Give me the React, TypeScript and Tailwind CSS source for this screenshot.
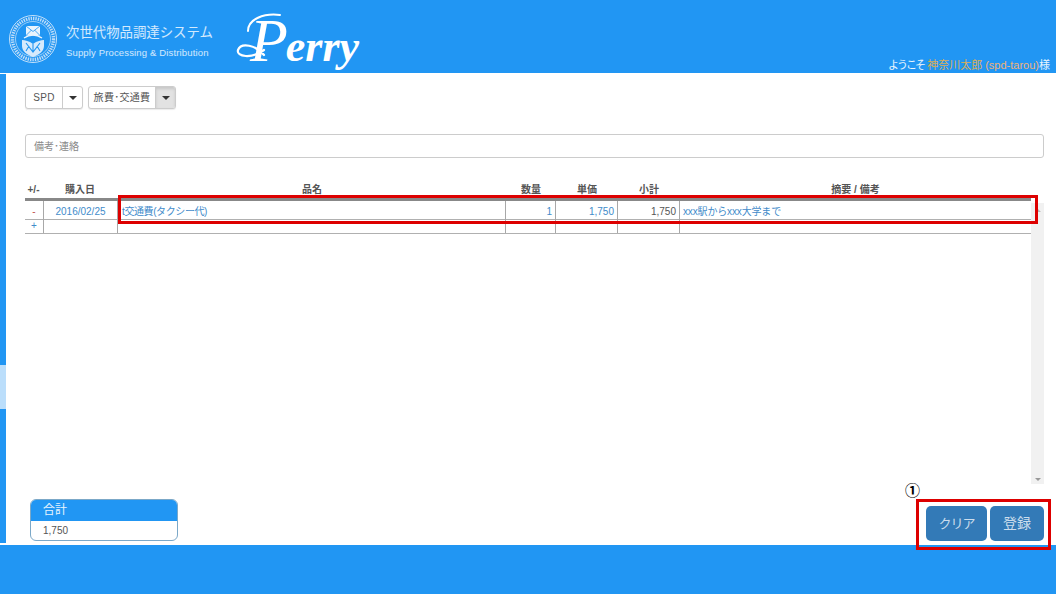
function Emblem() {
  return (
    <svg viewBox="0 0 50 52" className="w-[50px] h-[52px] shrink-0 opacity-90" fill="none">
      <circle cx="25" cy="26" r="23.5" stroke="#d5e9fb" strokeWidth="1" />
      <circle cx="25" cy="26" r="20.5" stroke="#cfe5fa" strokeWidth="3.4" strokeDasharray="1.4 1" />
      <circle cx="25" cy="26" r="17.5" stroke="#e3f0fc" strokeWidth="0.7" />
      <path d="M14 27c3 0 7 1 11 4 4-3 8-4 11-4v6c0 6-6 9-11 11-5-2-11-5-11-11z" fill="#eaf4fd" />
      <path d="M18 30l7 9 7-9M25 31v9M21 33l-3 5M29 33l3 5" stroke="#2196f3" strokeWidth="1.1" />
      <path d="M16 25c3-2 5-3 9-3s6 1 9 3" stroke="#fff" strokeWidth="1.4" />
      <rect x="18" y="13" width="14" height="9.5" fill="#fff" />
      <path d="M18 13l7 5.5 7-5.5M18 22.500l5.500-5.500M32 22.500L26.500 17" stroke="#2196f3" strokeWidth="0.8" />
    </svg>
  );
}

function Caret() {
  return <span className="w-0 h-0 border-x-[4px] border-x-transparent border-t-[4px] border-t-[#333]" />;
}

function Dropdown({ label, wide, active }: { label: string; wide: string; active?: boolean }) {
  return (
    <div className="flex h-[23px] border border-[#ccc] rounded-[3px] bg-white overflow-hidden shadow-[0_1px_1px_rgba(0,0,0,0.08)]">
      <div className={`${wide} flex items-center justify-center text-[10px] tracking-[0.3px] text-[#555] border-r border-[#ccc]`}>{label}</div>
      <div className={`w-[19px] flex items-center justify-center ${active ? "bg-[#e2e2e2] shadow-[inset_0_2px_3px_rgba(0,0,0,0.12)]" : ""}`}>
        <Caret />
      </div>
    </div>
  );
}

const gridCols = "grid grid-cols-[19px_74px_388px_50px_62px_62px_1fr]";
const cellLine = "border-r border-[#a8a8a8]";

function PerryLogo() {
  return (
    <div className="relative ml-[21px] mt-[-4px] w-[130px] h-[62px] pl-[16px] text-white font-['Liberation_Serif',serif] italic whitespace-nowrap">
      <span className="text-[62px] leading-[62px]">P</span>
      <span className="text-[44px] leading-[62px] font-bold ml-[-2px]">erry</span>
      {/* ロゴの飾り線 */}
      <svg viewBox="0 0 130 62" className="absolute inset-0 w-[130px] h-[62px]" fill="none" stroke="#fff" strokeLinecap="round">
        <path d="M30 46C22 36 7 33 4 41c-2 7 14 9 26 0" strokeWidth="2.200" />
        <path d="M14 22C14 10 30 4 46 6" strokeWidth="2" />
      </svg>
    </div>
  );
}

function Header() {
  return (
    <header className="h-[73px] bg-[#2196f3] flex relative shrink-0">
      <div className="pl-2 pt-[13px] flex items-start">
        <Emblem />
        <div className="ml-2 pt-[10px] text-white/80">
          <div className="text-[13.4px] leading-[20px]">次世代物品調達システム</div>
          <div className="text-[9.5px] leading-[14px] mt-[3px] tracking-[0.15px] font-['Liberation_Sans',sans-serif]">Supply Processing &amp; Distribution</div>
        </div>
        <PerryLogo />
      </div>
      <div className="absolute right-[6px] bottom-[1px] text-[11px] leading-[14px] text-white/90">
        <span className="tracking-[-2px]">ようこそ</span> <span className="text-[#dcae58]">神奈川太郎</span> <span className="text-[#eeb27a]">(spd-tarou)</span>様
      </div>
    </header>
  );
}

function LineTable() {
  return (
    <div className="w-[1006px] text-[10px] text-[#428bca]">
      <div className={`${gridCols} h-[18px] items-center text-center font-bold text-[#555]`}>
        <div className="pr-[2px]">+/-</div>
        <div className="pr-[2px]">購入日</div>
        <div>品名</div>
        <div>数量</div>
        <div>単価</div>
        <div>小計</div>
        <div>摘要 / 備考</div>
      </div>
      <div className={`${gridCols} h-[22px] border-t-[3px] border-t-[#888] border-b border-b-[#b0b0b0] items-stretch leading-[21px]`}>
        <div className={`${cellLine} text-center text-[#c0504d]`}>-</div>
        <div className={`${cellLine} text-center`}>2016/02/25</div>
        <div className={`${cellLine} pl-[4px] tracking-[-0.4px]`}>t交通費(タクシー代)</div>
        <div className={`${cellLine} text-right pr-[3px]`}>1</div>
        <div className={`${cellLine} text-right pr-[3px]`}>1,750</div>
        <div className={`${cellLine} text-right pr-[3px] text-[#555]`}>1,750</div>
        <div className="pl-[3px] tracking-[-0.15px]">xxx駅からxxx大学まで</div>
      </div>
      <div className={`${gridCols} h-[14px] border-b border-b-[#b0b0b0] leading-[12px]`}>
        <div className={`${cellLine} text-center`}>+</div>
        <div className={cellLine} />
        <div className={cellLine} />
        <div className={cellLine} />
        <div className={cellLine} />
        <div className={cellLine} />
        <div />
      </div>
    </div>
  );
}

export default function App() {
  return (
    <div className="w-[1056px] h-[594px] flex flex-col overflow-hidden bg-white font-['Liberation_Sans','Noto_Sans_CJK_JP',sans-serif]">
      <Header />
      <div className="flex-1 flex min-h-0">
        <div className="w-[6px] flex flex-col shrink-0 pt-px pb-[2px]">
          <div className="h-[291px] bg-[#2196f3]" />
          <div className="h-[44px] bg-[#bbdefb]" />
          <div className="flex-1 bg-[#2196f3]" />
        </div>
        <main className="flex-1 relative pl-[19px] pr-[12px] pt-[13px] flex flex-col">
          <div className="flex gap-[5px]">
            <Dropdown label="SPD" wide="w-[37px]" />
            <Dropdown label="旅費･交通費" wide="w-[67px]" active />
          </div>
          <div className="mt-[25px] h-[24px] border border-[#ccc] rounded-[3px] flex items-center px-2 text-[10px] text-[#888]">
            備考･連絡
          </div>
          <div className="mt-[22px] flex h-[304px] shrink-0">
            <LineTable />
            <div className="mt-[23px] w-[13px] bg-[#f1f1f1] flex flex-col items-center justify-between pt-[6px] pb-[3px]">
              <span className="w-0 h-0 border-x-[3px] border-x-transparent border-b-[3px] border-b-[#bbb]" />
              <span className="w-0 h-0 border-x-[3px] border-x-transparent border-t-[3px] border-t-[#999]" />
            </div>
          </div>
          <div className="flex-1 flex items-end justify-between pb-[4px]">
            <div className="ml-[5px] w-[148px] h-[42px] rounded-[6px] border border-[#7ba8c8] overflow-hidden">
              <div className="h-[21px] bg-[#2196f3] text-white/90 text-[12px] leading-[20px] pl-3">合計</div>
              <div className="text-[10px] leading-[19px] pl-3 text-[#555]">1,750</div>
            </div>
            <div className="flex gap-[3px]">
              <button className="w-[61px] h-[35px] rounded-[5px] bg-[#337ab7] text-white/75 text-[13px] tracking-[-1px]">クリア</button>
              <button className="w-[54px] h-[35px] rounded-[5px] bg-[#337ab7] text-white/75 text-[14px]">登録</button>
            </div>
          </div>
          {/* 注釈の赤枠 */}
          <div className="absolute left-[112px] top-[122px] w-[920px] h-[29px] border-[3px] border-[#dd0000]" />
          <div className="absolute left-[910px] top-[426px] w-[135px] h-[51px] border-[3px] border-[#dd0000] z-10" />
          <div className="absolute left-[899px] top-[411px] w-[15px] h-[14px] text-[15px] leading-[14px] text-black text-center font-bold">①</div>
        </main>
      </div>
      <div className="h-[49px] bg-[#2196f3] shrink-0" />
    </div>
  );
}
